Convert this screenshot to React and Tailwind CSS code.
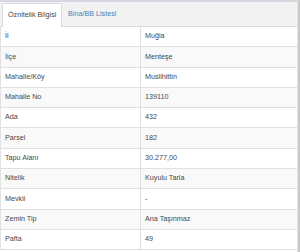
const rows = [
  ['İl', 'Muğla'],
  ['İlçe', 'Menteşe'],
  ['Mahalle/Köy', 'Muslihittin'],
  ['Mahalle No', '139110'],
  ['Ada', '432'],
  ['Parsel', '182'],
  ['Tapu Alanı', '30.277,00'],
  ['Nitelik', 'Kuyulu Tarla'],
  ['Mevkii', '-'],
  ['Zemin Tip', 'Ana Taşınmaz'],
  ['Pafta', '49'],
]

export default function App() {
  return (
    <div className="w-[300px] h-[252px] overflow-hidden bg-white flex font-['Liberation_Sans',Arial,sans-serif] text-[7.2px] text-[#484848]">
      <div className="flex-1 flex flex-col border-t-2 border-[#d3d9df]">
        <div className="h-[25px] shrink-0 flex items-end bg-[#f2f2f2] border-b border-[#dcdcdc] pl-[2px]">
          <div className="h-[24px] -mb-px w-[60px] bg-white border-x border-t border-[#dcdcdc] flex items-center pl-[5px]">
            Öznitelik Bilgisi
          </div>
          <div className="h-[24px] flex items-center pl-[6px] text-[#4a80b8]">Bina/BB Listesi</div>
        </div>
        <div className="border-l border-[#e2e2e2]">
          {rows.map(([k, v], i) => (
            <div
              key={k}
              className={`grid grid-cols-[140px_1fr] h-[20.3px] border-b border-[#e0e0e0] ${i % 2 === 1 ? 'bg-[#f9f9f9]' : 'bg-white'}`}
            >
              <div className="flex items-center pl-[4px] border-r border-[#e0e0e0]">{k}</div>
              <div className="flex items-center pl-[4px]">{v}</div>
            </div>
          ))}
        </div>
      </div>
      <div className="w-[3px] shrink-0 border-l border-[#e6e6e6] bg-[#c9c9c9]" />
    </div>
  )
}
